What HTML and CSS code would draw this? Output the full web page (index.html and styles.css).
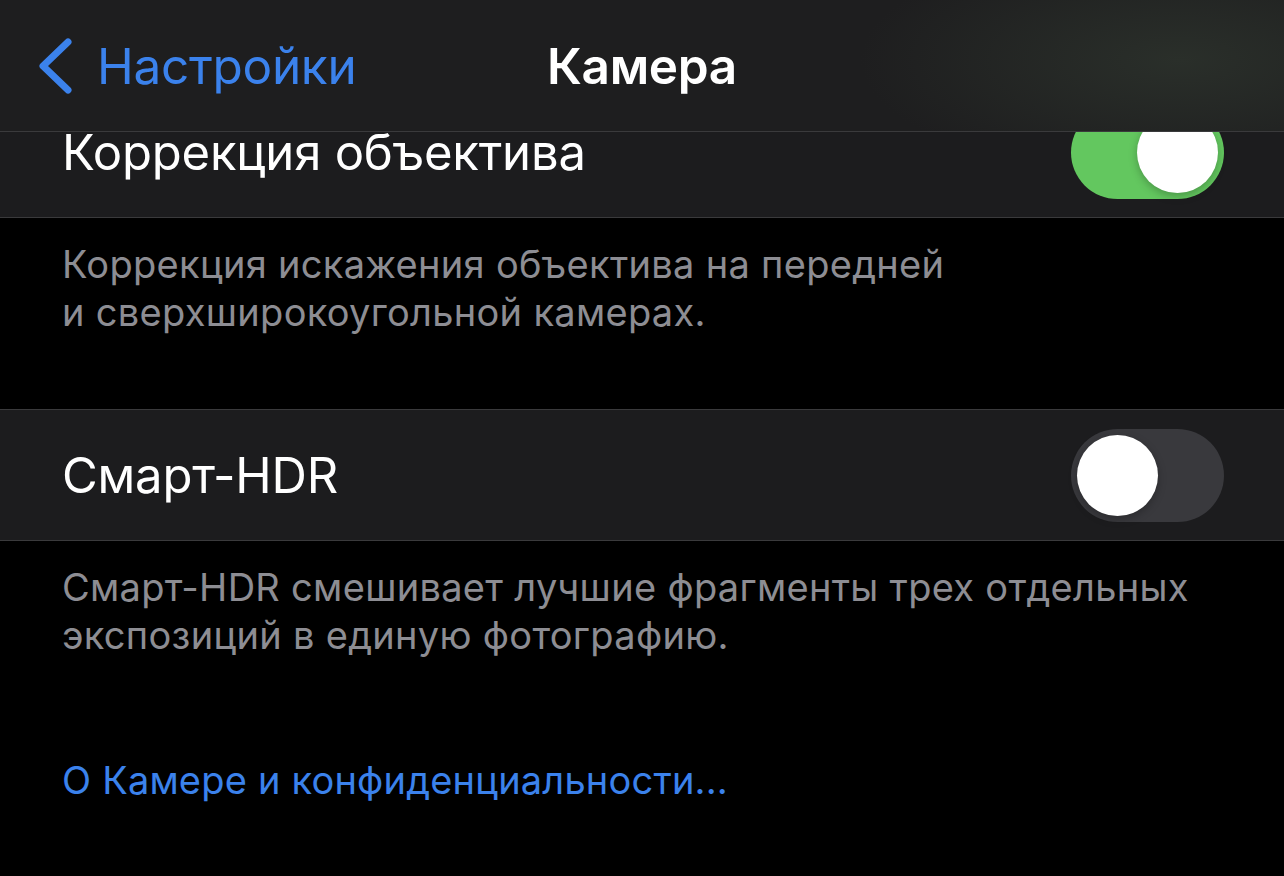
FILE: index.html
```html
<!DOCTYPE html>
<html lang="ru">
<head>
    <meta charset="UTF-8">
    <title>Камера</title>
    <link rel="stylesheet" href="styles.css">
</head>
<body>
    <header class="nav-bar">
        <a class="back-button" href="#">
            <svg class="chevron" width="36" height="56" viewBox="0 0 36 56">
                <path d="M31 4 L6 28 L31 52" fill="none" stroke="currentColor" stroke-width="7" stroke-linecap="round" stroke-linejoin="round"/>
            </svg>
            <span>Настройки</span>
        </a>
        <h1 class="nav-title">Камера</h1>
    </header>

    <main class="settings">
        <section class="group">
            <div class="cell">
                <span class="cell-label">Коррекция объектива</span>
                <span class="switch on"><span class="knob"></span></span>
            </div>
        </section>
        <p class="group-footer">Коррекция искажения объектива на передней<br>и сверхширокоугольной камерах.</p>

        <section class="group">
            <div class="cell">
                <span class="cell-label">Смарт-HDR</span>
                <span class="switch"><span class="knob"></span></span>
            </div>
        </section>
        <p class="group-footer">Смарт-HDR смешивает лучшие фрагменты трех отдельных<br>экспозиций в единую фотографию.</p>

        <a class="privacy-link" href="#">О Камере и конфиденциальности...</a>
    </main>
</body>
</html>
```

FILE: styles.css
```css
body {
    margin: 0;
    background-color: #000;
    color: #fff;
    font-family: Inter, "Noto Sans", sans-serif;
    overflow: hidden;
}
.nav-bar {
    position: fixed;
    top: 0;
    left: 0;
    right: 0;
    height: 132px;
    z-index: 10;
    display: flex;
    align-items: center;
    background: radial-gradient(ellipse 320px 120px at 1180px 60px, #2a2f2a 0%, rgba(30, 30, 31, 0) 100%), #1e1e1f;
    border-bottom: 1px solid #3a3a3c;
    box-sizing: border-box;
}
.back-button {
    display: flex;
    align-items: center;
    gap: 24px;
    padding-left: 37px;
    color: #3b82ec;
    text-decoration: none;
    font-size: 49.5px;
    letter-spacing: -0.3px;
    position: relative;
    z-index: 1;
}
.chevron {
    display: block;
}
.nav-title {
    position: absolute;
    left: 0;
    right: 0;
    margin: 0;
    text-align: center;
    font-size: 49.5px;
    font-weight: 600;
    letter-spacing: -0.3px;
}
.settings {
    padding-top: 86px;
}
.group {
    background-color: #1c1c1e;
    border-top: 1px solid #3a3a3c;
    border-bottom: 1px solid #3a3a3c;
}
.cell {
    height: 130px;
    display: flex;
    align-items: center;
    justify-content: space-between;
    padding: 0 60px 0 62px;
}
.cell-label {
    font-size: 49px;
    letter-spacing: -0.2px;
}
.switch {
    width: 153px;
    height: 93px;
    border-radius: 47px;
    background-color: #39393d;
    display: flex;
    align-items: center;
    padding: 0 6px;
    box-sizing: border-box;
}
.switch.on {
    background-color: #63c75f;
    justify-content: flex-end;
}
.knob {
    width: 81px;
    height: 81px;
    border-radius: 50%;
    background-color: #fff;
    box-shadow: 0 3px 8px rgba(0, 0, 0, 0.25);
}
.group-footer {
    margin: 0;
    padding: 22px 62px 73px;
    color: #8d8d93;
    font-size: 38px;
    line-height: 48px;
    letter-spacing: 0.3px;
}
.privacy-link {
    display: block;
    padding: 25px 62px 0;
    color: #3b82ec;
    font-size: 38px;
    letter-spacing: 0.2px;
    text-decoration: none;
}
```
